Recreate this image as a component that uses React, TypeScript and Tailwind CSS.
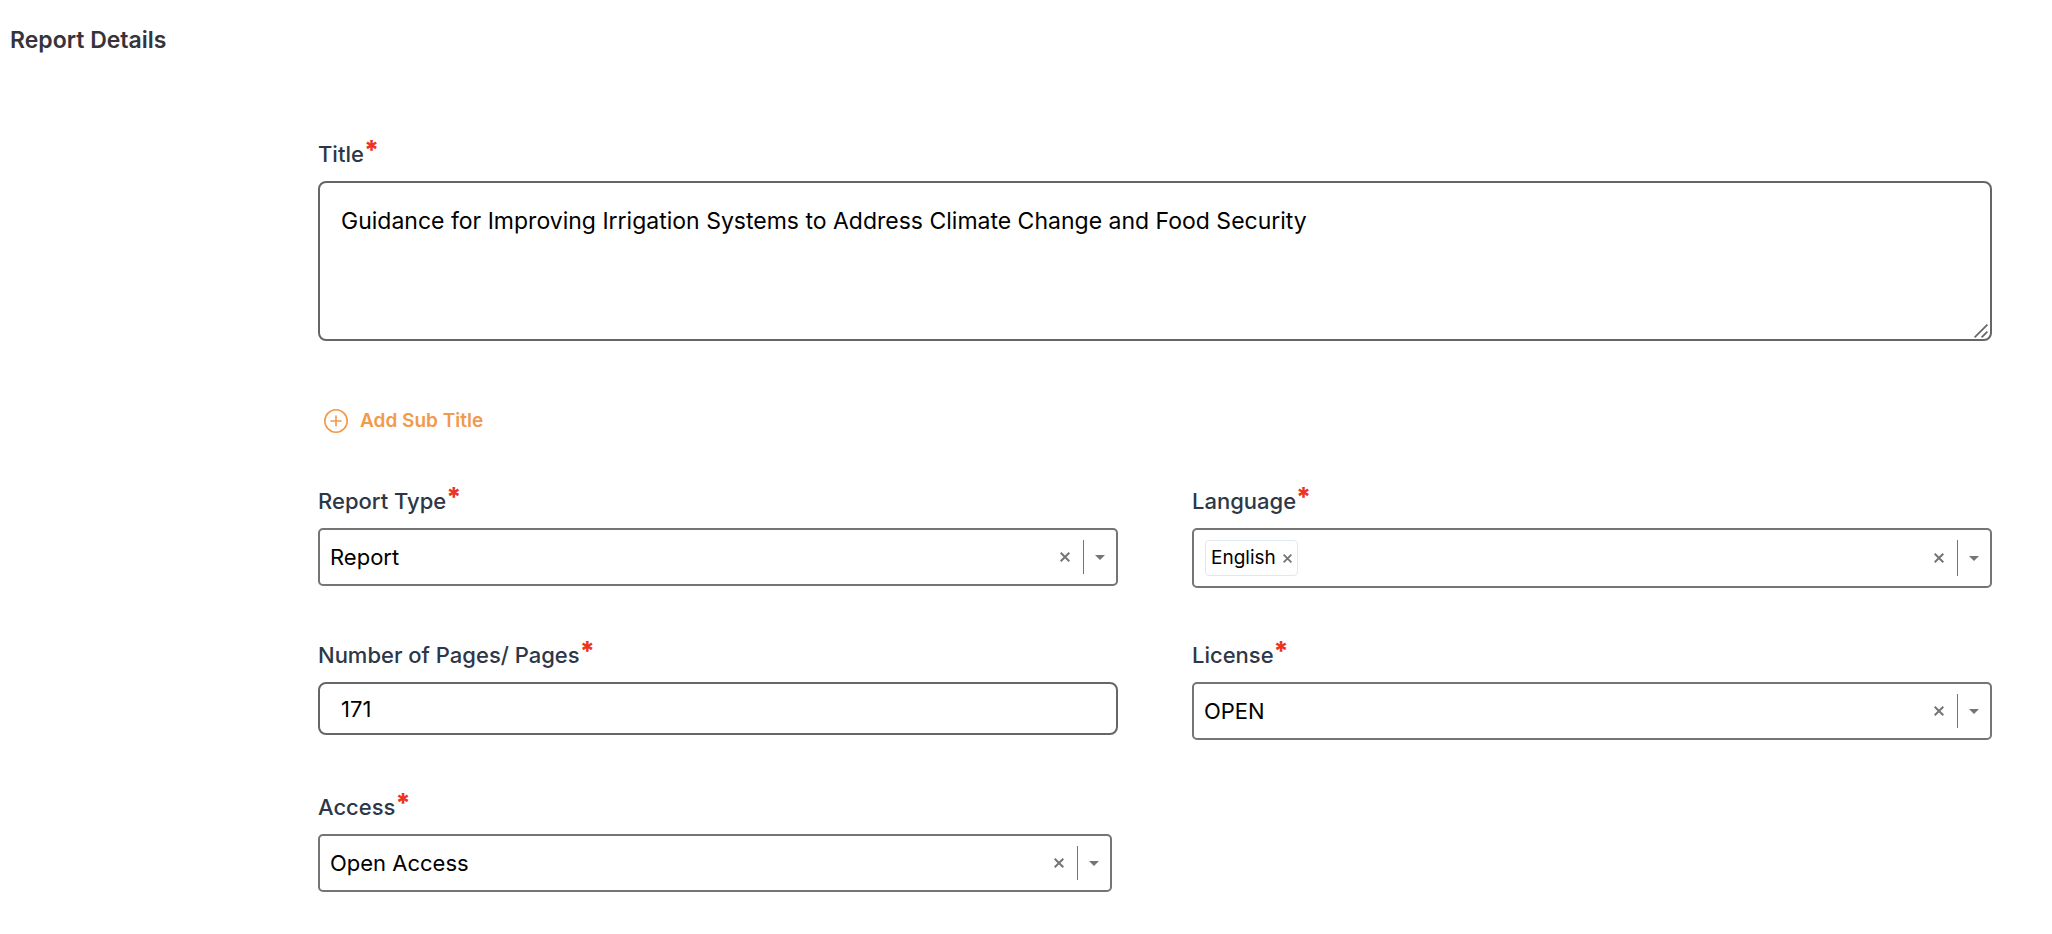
import { useState, type ReactNode } from "react";

function Label({ htmlFor, children }: { htmlFor: string; children: ReactNode }) {
  return (
    <label htmlFor={htmlFor} className="mb-[10px] flex h-[34px] text-[22px] leading-[34px] font-medium text-[#2d3748]">
      {children}
      <span className="text-[26px] leading-[26px] font-extrabold text-[#ee3322]">*</span>
    </label>
  );
}

function Cross({ className }: { className: string }) {
  return (
    <svg viewBox="0 0 10 10" className={className} fill="none" stroke="currentColor" strokeWidth="2" aria-hidden="true">
      <path d="M0.7 0.7 L9.3 9.3 M9.3 0.7 L0.7 9.3" />
    </svg>
  );
}

function Indicators({ name, onClear }: { name: string; onClear: () => void }) {
  return (
    <>
      <button type="button" aria-label={`Clear ${name}`} onClick={onClear} className="flex w-[36px] shrink-0 items-center justify-center text-[#757575]">
        <Cross className="size-[10px]" />
      </button>
      <span className="my-[10px] w-px shrink-0 bg-[#757575]" />
      <span className="pointer-events-none flex w-[32px] shrink-0 items-center justify-center text-[#757575]">
        <svg viewBox="0 0 10 5" className="h-[5px] w-[10px]" fill="currentColor" aria-hidden="true">
          <path d="M0 0H10L5 5Z" />
        </svg>
      </span>
    </>
  );
}

function SelectField({ id, label, options }: { id: string; label: string; options: string[] }) {
  const [value, setValue] = useState(options[0]);
  return (
    <div>
      <Label htmlFor={id}>{label}</Label>
      <div className="flex h-[58px] rounded-[5px] border-2 border-[#757575] bg-white">
        <select
          id={id}
          value={value}
          onChange={(e) => setValue(e.target.value)}
          className="min-w-0 flex-1 appearance-none bg-transparent pl-[10px] text-[22px] text-black outline-none"
        >
          <option value="" />
          {options.map((o) => (
            <option key={o}>{o}</option>
          ))}
        </select>
        <Indicators name={label} onClear={() => setValue("")} />
      </div>
    </div>
  );
}

function LanguageField() {
  const [languages, setLanguages] = useState(["English"]);
  return (
    <div>
      <Label htmlFor="language">Language</Label>
      <div className="flex h-[60px] items-stretch rounded-[5px] border-2 border-[#757575] bg-white">
        <div className="flex min-w-0 flex-1 items-center pl-[11px]">
          {languages.map((l) => (
            <span key={l} className="flex h-[36px] items-center gap-[7px] rounded-[4px] border border-[#e2e8f0] px-[5px] text-[19px] text-black">
              {l}
              <button
                type="button"
                aria-label={`Remove ${l}`}
                onClick={() => setLanguages(languages.filter((x) => x !== l))}
                className="text-[#757575]"
              >
                <Cross className="size-[9px]" />
              </button>
            </span>
          ))}
          <input id="language" type="text" role="combobox" aria-expanded="false" className="min-w-0 flex-1 bg-transparent pl-1 text-[22px] outline-none" />
        </div>
        <Indicators name="Language" onClear={() => setLanguages([])} />
      </div>
    </div>
  );
}

export default function App() {
  return (
    <main className="min-h-screen bg-white pt-[24px] font-['Inter','Liberation_Sans',sans-serif]">
      <h1 className="pl-[10px] text-[23px] leading-[32px] font-semibold text-[#36343b]">Report Details</h1>

      <form className="mt-[81px] mr-[60px] ml-[318px]">
        <Label htmlFor="title">Title</Label>
        <div className="relative">
          <textarea
            id="title"
            defaultValue="Guidance for Improving Irrigation Systems to Address Climate Change and Food Security"
            className="block h-[160px] w-full resize-none rounded-[8px] border-2 border-[#666666] bg-white px-[21px] py-[20px] text-[23px] leading-[36px] text-black outline-none"
          />
          <svg viewBox="0 0 14 14" className="pointer-events-none absolute right-[4px] bottom-[3px] size-[14px]" fill="none" stroke="#666666" strokeWidth="1.7" aria-hidden="true">
            <path d="M0.6 13.4 L13.4 0.6 M7.6 13.4 L13.4 7.6" />
          </svg>
        </div>

        <button type="button" className="mt-[68px] ml-[6px] flex h-[24px] items-center gap-[12px] text-[19px] font-semibold text-[#f2994a]">
          <svg viewBox="0 0 24 24" className="size-[24px]" fill="none" stroke="currentColor" strokeWidth="1.6" strokeLinecap="round" aria-hidden="true">
            <circle cx="12" cy="12" r="11.2" />
            <path d="M12 7v10M7 12h10" />
          </svg>
          Add Sub Title
        </button>

        <div className="mt-[51px] grid grid-cols-2 items-start gap-x-[74px] gap-y-[50px]">
          <SelectField id="report-type" label="Report Type" options={["Report"]} />
          <LanguageField />
          <div>
            <Label htmlFor="pages">Number of Pages/ Pages</Label>
            <input
              id="pages"
              type="text"
              defaultValue="171"
              className="block h-[53px] w-full rounded-[8px] border-2 border-[#666666] bg-white px-[21px] text-[22px] text-black outline-none"
            />
          </div>
          <SelectField id="license" label="License" options={["OPEN"]} />
          <div className="pr-[6px]">
            <SelectField id="access" label="Access" options={["Open Access"]} />
          </div>
        </div>
      </form>
    </main>
  );
}
